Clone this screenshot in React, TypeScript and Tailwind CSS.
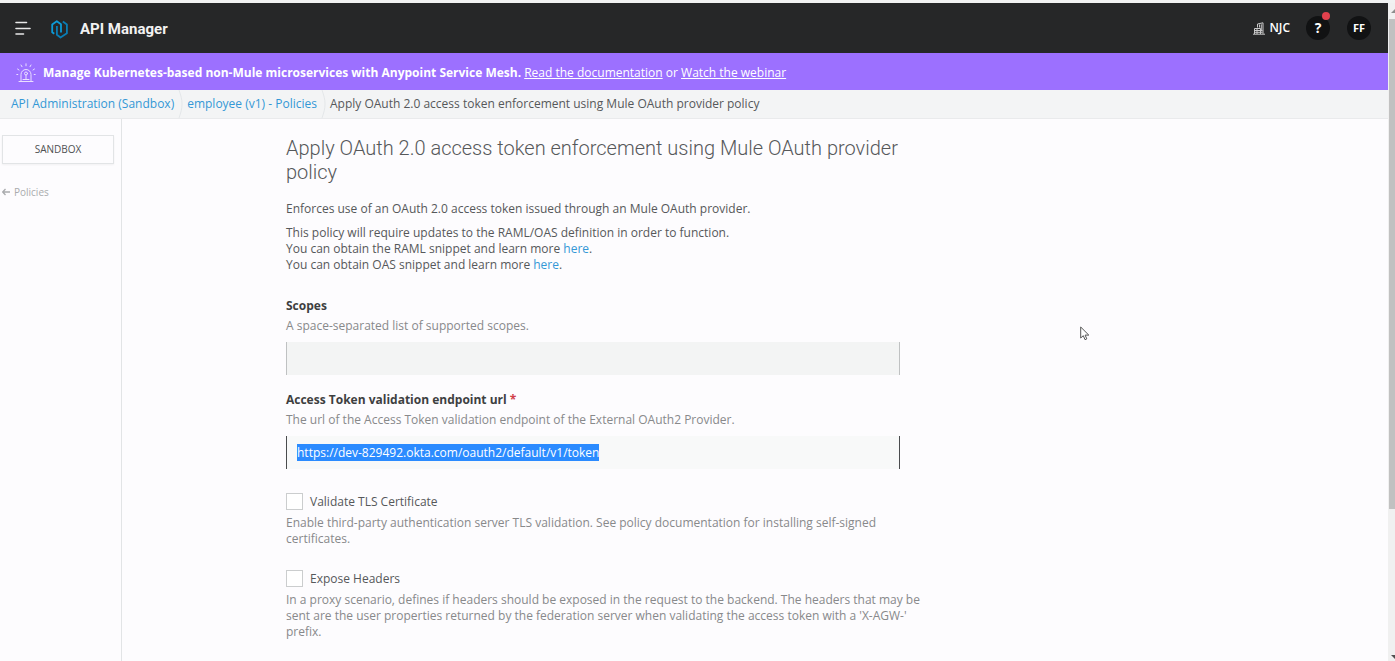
import { useEffect, useRef } from "react";
import type { ReactNode } from "react";

function MenuIcon() {
  return (
    <svg width="16" height="16" viewBox="0 0 16 16" fill="none" stroke="#e8e8e8" strokeWidth="1.6" strokeLinecap="round" aria-hidden="true">
      <path d="M1 2.500h10.500M1 8.500h14M1 14h7.500" />
    </svg>
  );
}

function Logo() {
  return (
    <svg width="17" height="20" viewBox="0 0 17 20" fill="none" strokeWidth="1.800" strokeLinejoin="round" aria-hidden="true">
      <path d="M3.200 14.800 1.200 13.200V5.500L5.800 2.200l4.200 3v8.300" stroke="#0c9bd8" />
      <path d="M5.900 7v8.700l3.600 2.800 6.400-4.300V5.600L11.800 2.600" stroke="#0a7db5" />
    </svg>
  );
}

function BeaconIcon() {
  return (
    <svg width="20" height="20" viewBox="0 0 20 20" fill="none" stroke="#eadfff" strokeWidth="1" strokeLinecap="round" aria-hidden="true">
      <path d="M3 18.500h14M5 18v-6.500a5 5 0 0 1 10 0V18M7 16.500h6" />
      <circle cx="10" cy="10.500" r="1.500" />
      <path d="M10 12v4M10 .8v2M5 2l1 1.700M15 2l-1 1.700M1.500 6l1.500 1M18.500 6 17 7M.8 11.500h1M18.200 11.500h1" />
    </svg>
  );
}

function BuildingIcon() {
  return (
    <svg width="12" height="13" viewBox="0 0 12 13" fill="none" stroke="#c9c9c9" strokeWidth="1" aria-hidden="true">
      <path d="M4.500 5.500V2L10 .8v11M1.500 12V6.500h6V12M0 12.200h12M1.500 8.500h8M1.500 10.300h8M6.500 2.500v3M8.300 2.300v7M4 7v5" />
    </svg>
  );
}

function Separator() {
  return (
    <svg width="5" height="28" viewBox="0 0 5 28" fill="none" stroke="#e4e7e9" aria-hidden="true">
      <path d="M1 0c2 6 3 9 3 14s-1 8-3 14" />
    </svg>
  );
}

function Header() {
  return (
    <header className="flex h-[50px] items-center bg-[#262728] pr-[17px] pl-[15px] text-white">
      <button type="button" aria-label="Open menu" className="flex">
        <MenuIcon />
      </button>
      <div className="ml-5 flex items-center gap-3 pt-0.5">
        <Logo />
        <span className="font-[Roboto] text-[15px] font-bold text-[#f2f2f2]">API Manager</span>
      </div>
      <div className="ml-auto flex items-center">
        <button type="button" className="flex items-center gap-1 text-xs font-semibold">
          <BuildingIcon />
          NJC
        </button>
        <button type="button" aria-label="Help" className="relative ml-4 flex size-6 items-center justify-center rounded-full bg-[#111213] text-sm font-bold">
          ?
          <span className="absolute -top-1 right-0 size-2 rounded-full bg-[#e2414d]" />
        </button>
        <button type="button" className="ml-[17px] flex size-6 items-center justify-center rounded-full bg-[#111213] text-[11px] font-bold">
          FF
        </button>
      </div>
    </header>
  );
}

function Banner() {
  return (
    <div className="flex h-[37px] items-center gap-[7px] bg-[#9c70ff] pt-0.5 pl-4 text-xs text-white">
      <BeaconIcon />
      <p>
        <strong className="font-bold">Manage Kubernetes-based non-Mule microservices with Anypoint Service Mesh.</strong>{" "}
        <a href="#documentation" className="underline">Read the documentation</a> or{" "}
        <a href="#webinar" className="underline">Watch the webinar</a>
      </p>
    </div>
  );
}

function Breadcrumb() {
  return (
    <nav aria-label="Breadcrumb" className="flex h-[29px] items-center gap-1 border-b border-[#e9eaec] bg-[#f3f4f5] pl-[11px] text-xs text-[#56585a]">
      <a href="#administration" className="text-[#3498d6]">API Administration (Sandbox)</a>
      <Separator />
      <a href="#policies" className="text-[#3498d6]">employee (v1) - Policies</a>
      <Separator />
      <span>Apply OAuth 2.0 access token enforcement using Mule OAuth provider policy</span>
    </nav>
  );
}

function Sidebar() {
  return (
    <aside className="w-[122px] shrink-0 border-r border-[#e2e4e6] px-[2px] pt-4">
      <button type="button" className="flex h-[29px] w-28 items-center justify-center border border-[#e2e4e6] text-[10px] text-[#4f5152] shadow-xs">
        SANDBOX
      </button>
      <a href="#back" className="mt-5 flex items-center gap-1 text-[10px] leading-4 text-[#a9abad]">
        <svg width="8" height="8" viewBox="0 0 8 8" fill="none" stroke="currentColor" strokeWidth="1.300" aria-hidden="true">
          <path d="M8 4H1M3.500 1 .7 4l2.800 3" />
        </svg>
        Policies
      </a>
    </aside>
  );
}

function CheckField({ id, label, children }: { id: string; label: string; children: ReactNode }) {
  return (
    <div>
      <div className="flex items-center gap-[7px]">
        <input id={id} type="checkbox" className="size-[17px] appearance-none border border-[#cbcdce] bg-white checked:bg-[#3498d6]" />
        <label htmlFor={id} className="text-[#56585a]">{label}</label>
      </div>
      <p className="mt-[5px] text-[#88898b]">{children}</p>
    </div>
  );
}

function PolicyForm() {
  const endpoint = useRef<HTMLInputElement>(null);

  useEffect(() => {
    endpoint.current?.focus();
    endpoint.current?.select();
  }, []);

  return (
    <main className="grow pt-[17px] pl-[164px] text-xs leading-4 text-[#56585a]">
      <div className="max-w-[640px]">
        <h1 className="font-[Roboto] text-xl leading-6 font-light">
          Apply OAuth 2.0 access token enforcement using Mule OAuth provider policy
        </h1>
        <p className="mt-[17px]">Enforces use of an OAuth 2.0 access token issued through an Mule OAuth provider.</p>
        <p className="mt-2">
          This policy will require updates to the RAML/OAS definition in order to function.
          <br />
          You can obtain the RAML snippet and learn more <a href="#raml" className="text-[#3498d6]">here</a>.
          <br />
          You can obtain OAS snippet and learn more <a href="#oas" className="text-[#3498d6]">here</a>.
        </p>
        <form className="mt-[25px]">
          <label htmlFor="scopes" className="block font-bold text-[#3d3f41]">Scopes</label>
          <p className="mt-1 text-[#88898b]">A space-separated list of supported scopes.</p>
          <input id="scopes" type="text" className="mt-2 block h-[33px] w-full max-w-[614px] border-x border-[#bfc1c2] bg-[#f3f4f4] px-[10px] outline-none" />
          <label htmlFor="endpoint" className="mt-[17px] block font-bold text-[#3d3f41]">
            Access Token validation endpoint url <span className="text-[#d0404a]">*</span>
          </label>
          <p className="mt-1 text-[#88898b]">The url of the Access Token validation endpoint of the External OAuth2 Provider.</p>
          <input
            id="endpoint"
            ref={endpoint}
            type="text"
            defaultValue="https://dev-829492.okta.com/oauth2/default/v1/token"
            className="mt-2 block h-[33px] w-full max-w-[614px] border-x border-[#4a4c4e] bg-[#f8f9f9] px-[10px] leading-4 outline-none selection:bg-[#2b8bff] selection:text-white"
          />
          <div className="mt-6 flex flex-col gap-[23px]">
            <CheckField id="tls" label="Validate TLS Certificate">
              Enable third-party authentication server TLS validation. See policy documentation for installing self-signed certificates.
            </CheckField>
            <CheckField id="headers" label="Expose Headers">
              In a proxy scenario, defines if headers should be exposed in the request to the backend. The headers that may be sent are the user
              properties returned by the federation server when validating the access token with a 'X-AGW-' prefix.
            </CheckField>
          </div>
        </form>
      </div>
    </main>
  );
}

function ScrollTrack() {
  return (
    <div className="flex w-[7px] shrink-0 flex-col overflow-hidden bg-[#f0f0f0]" aria-hidden="true">
      <svg width="7" height="16" viewBox="0 0 7 16" className="shrink-0">
        <path d="M3 10h8L7 6z" fill="#8d8d8d" />
      </svg>
      <div className="ml-px grow-[490] bg-[#c1c1c1]" />
      <div className="grow-[136]" />
      <svg width="7" height="16" viewBox="0 0 7 16" className="shrink-0">
        <path d="M3 10h8l-4 4z" fill="#505050" />
      </svg>
    </div>
  );
}

function Pointer() {
  return (
    <svg width="10" height="15" viewBox="0 0 10 15" className="pointer-events-none absolute top-[326px] left-[1080px]" aria-hidden="true">
      <path d="M.7 1v11l2.600-2.300 1.700 4 1.800-.8-1.700-3.800h3.700z" fill="#fff" stroke="#555" />
    </svg>
  );
}

export default function App() {
  return (
    <div className="relative flex min-h-screen flex-col bg-[#fdfcfe] font-['Open_Sans',sans-serif]">
      <div className="h-[3px] bg-[#f1f2f2]" />
      <div className="flex grow">
        <div className="flex min-w-0 grow flex-col">
          <Header />
          <Banner />
          <Breadcrumb />
          <div className="flex grow">
            <Sidebar />
            <PolicyForm />
          </div>
        </div>
        <ScrollTrack />
      </div>
      <Pointer />
    </div>
  );
}
